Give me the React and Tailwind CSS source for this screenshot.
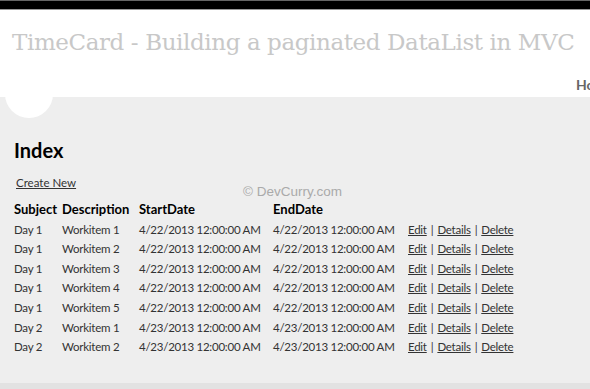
const rows = [
  ['Day 1', 'Workitem 1', '4/22/2013 12:00:00 AM', '4/22/2013 12:00:00 AM'],
  ['Day 1', 'Workitem 2', '4/22/2013 12:00:00 AM', '4/22/2013 12:00:00 AM'],
  ['Day 1', 'Workitem 3', '4/22/2013 12:00:00 AM', '4/22/2013 12:00:00 AM'],
  ['Day 1', 'Workitem 4', '4/22/2013 12:00:00 AM', '4/22/2013 12:00:00 AM'],
  ['Day 1', 'Workitem 5', '4/22/2013 12:00:00 AM', '4/22/2013 12:00:00 AM'],
  ['Day 2', 'Workitem 1', '4/23/2013 12:00:00 AM', '4/23/2013 12:00:00 AM'],
  ['Day 2', 'Workitem 2', '4/23/2013 12:00:00 AM', '4/23/2013 12:00:00 AM'],
]

export default function App() {
  return (
    <div className="relative w-[590px] h-[389px] overflow-hidden bg-[#eeeeee] text-[#333] font-['Lato',sans-serif]">
      {/* barra superior */}
      <div className="h-[10px] bg-black border-t border-t-[#666] border-b border-b-[#999]" />

      {/* cabecera */}
      <header className="h-[87px] bg-white flex flex-col">
        <h1 className="pl-[12px] pt-[17px] text-[23px] leading-[30px] text-[#c8c8c8] font-['DejaVu_Serif',serif] tracking-[-0.4px] whitespace-nowrap">
          TimeCard - Building a paginated DataList in MVC
        </h1>
        <nav className="mt-auto mb-[2px] flex justify-end">
          <div className="w-[14px] overflow-hidden whitespace-nowrap text-[14px] font-bold text-[#666]">Home</div>
        </nav>
      </header>

      {/* logo circular */}
      <div className="absolute left-[5px] top-[70px] w-[48px] h-[48px] rounded-full bg-white" />

      <main className="px-[14px] pt-[40px]">
        <h2 className="text-[20px] leading-[26px] font-bold text-black">Index</h2>
        <p className="mt-[12px] pl-[2px] text-[11.5px] leading-[16px]">
          <a href="#" className="underline text-[#333]">Create New</a>
        </p>

        <div className="relative">
          <span className="absolute left-[229px] top-[-7px] text-[13.5px] leading-[16px] text-[#aaa] font-['Liberation_Sans',sans-serif]">© DevCurry.com</span>
        </div>

        <table className="mt-[9px] border-collapse table-fixed w-[520px] text-[11.5px] tracking-[-0.25px]">
          <thead>
            <tr className="text-left font-bold text-black text-[13px] tracking-normal">
              <th className="w-[48px] p-0 h-[18px]">Subject</th>
              <th className="w-[77px] p-0">Description</th>
              <th className="w-[134px] p-0">StartDate</th>
              <th className="w-[135px] p-0">EndDate</th>
              <th className="p-0" />
            </tr>
          </thead>
          <tbody>
            {rows.map((r, i) => (
              <tr key={i} className="h-[19.6px]">
                <td className="p-0 whitespace-nowrap">{r[0]}</td>
                <td className="p-0 whitespace-nowrap">{r[1]}</td>
                <td className="p-0 whitespace-nowrap">{r[2]}</td>
                <td className="p-0 whitespace-nowrap">{r[3]}</td>
                <td className="p-0 whitespace-nowrap">
                  <a href="#" className="underline">Edit</a>
                  <span className="mx-[4px]">|</span>
                  <a href="#" className="underline">Details</a>
                  <span className="mx-[4px]">|</span>
                  <a href="#" className="underline">Delete</a>
                </td>
              </tr>
            ))}
          </tbody>
        </table>
      </main>

      <div className="absolute left-0 right-0 bottom-0 h-[6px] bg-[#e2e2e2]" />
    </div>
  )
}
